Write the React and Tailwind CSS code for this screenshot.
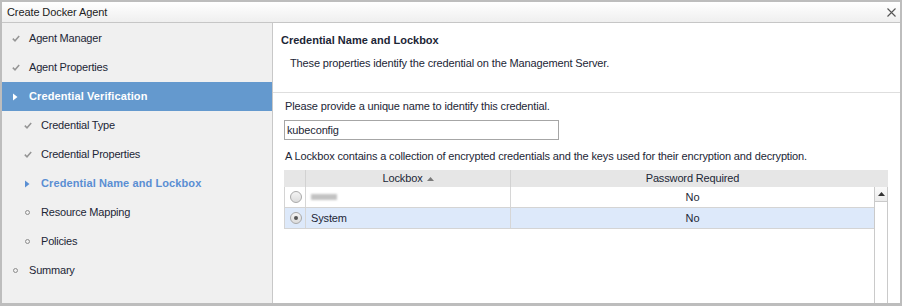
import React from "react";

const Check = () => (
  <svg width="8" height="7" viewBox="0 0 8 7" className="block">
    <path d="M0.8 3.6 L3 5.8 L7.2 1" fill="none" stroke="#959595" strokeWidth="1.5" />
  </svg>
);

const Tri = ({ color }) => (
  <svg width="5" height="8" viewBox="0 0 5 8" className="block">
    <polygon points="0,0.5 4.5,4 0,7.5" fill={color} />
  </svg>
);

const Circ = () => <div className="w-[5px] h-[5px] rounded-full border border-[#8c8c8c]" />;

function NavItem({ level, icon, label, selected, current }) {
  return (
    <div
      className={
        "h-[29px] flex items-center " +
        (level === 0 ? "pl-[10px] " : "pl-[22px] ") +
        (selected ? "bg-[#6499ce] " : "")
      }
    >
      <div className="w-[17px] flex items-center">
        {icon === "check" && <Check />}
        {icon === "circle" && <div className="pl-[1px]"><Circ /></div>}
        {icon === "tri" && <div className="pl-[1px]"><Tri color={selected ? "#ffffff" : "#5a8fd3"} /></div>}
      </div>
      <span
        className={
          selected
            ? "text-white font-bold tracking-[0.1px]"
            : current
            ? "text-[#5a8ed3] font-bold tracking-[0.1px]"
            : "text-[#1c2636] tracking-[-0.2px]"
        }
      >
        {label}
      </span>
    </div>
  );
}

function Radio({ checked }) {
  return (
    <div className="w-[12px] h-[12px] rounded-full border border-[#a9a9a9] bg-gradient-to-b from-[#f4f4f4] to-[#dcdcdc] flex items-center justify-center">
      {checked && <div className="w-[4px] h-[4px] rounded-full bg-[#555]" />}
    </div>
  );
}

export default function App() {
  return (
    <div className="w-[902px] h-[306px] border-2 border-b-[3px] border-[#bdbdbd] bg-white flex flex-col font-['Liberation_Sans',Arial,sans-serif] text-[11px] text-[#1c2636] overflow-hidden">
      <div className="h-[21px] shrink-0 border-b border-[#c6c6c6] bg-gradient-to-b from-white to-[#efefef] flex items-center justify-between pl-[5px] pr-[4px]">
        <span className="text-[11px] text-[#222] tracking-[-0.1px] pt-[1px]">Create Docker Agent</span>
        <svg width="9" height="9" viewBox="0 0 9 9">
          <path d="M0.5 0.5 L8.5 8.5 M8.5 0.5 L0.5 8.5" stroke="#555" strokeWidth="1.1" />
        </svg>
      </div>
      <div className="flex flex-1 min-h-0">
        <div className="w-[271px] shrink-0 bg-[#f0f0f0] border-r border-[#c8c8c8] flex flex-col pt-[1px]">
          <NavItem level={0} icon="check" label="Agent Manager" />
          <NavItem level={0} icon="check" label="Agent Properties" />
          <NavItem level={0} icon="tri" label="Credential Verification" selected />
          <NavItem level={1} icon="check" label="Credential Type" />
          <NavItem level={1} icon="check" label="Credential Properties" />
          <NavItem level={1} icon="tri" label="Credential Name and Lockbox" current />
          <NavItem level={1} icon="circle" label="Resource Mapping" />
          <NavItem level={1} icon="circle" label="Policies" />
          <NavItem level={0} icon="circle" label="Summary" />
        </div>
        <div className="flex-1 flex flex-col min-w-0 tracking-[-0.14px]">
          <div className="h-[70px] shrink-0 border-b border-[#dedede] pl-[8px] pt-[10px]">
            <div className="h-[14px] leading-[14px] font-bold text-[#1c2636] tracking-normal">Credential Name and Lockbox</div>
            <div className="h-[14px] leading-[14px] mt-[9px] pl-[9px]">These properties identify the credential on the Management Server.</div>
          </div>
          <div className="flex-1 flex flex-col pl-[11px] pt-[6px] min-h-0">
            <div className="h-[14px] leading-[14px] pl-[1px]">Please provide a unique name to identify this credential.</div>
            <div className="mt-[7px] w-[275px] h-[20px] border border-[#a6a6a6] flex items-center pl-[2px]">kubeconfig</div>
            <div className="h-[14px] leading-[14px] mt-[9px] pl-[1px]">A Lockbox contains a collection of encrypted credentials and the keys used for their encryption and decryption.</div>
            <div className="mt-[7px] w-[604px] flex-1 flex flex-col min-h-0">
              <div className="h-[17px] shrink-0 flex bg-[#e6e6e6]">
                <div className="w-[22px] border-r border-[#d2d2d2]" />
                <div className="w-[205px] border-r border-[#d2d2d2] flex items-center justify-center gap-[4px]">
                  <span>Lockbox</span>
                  <svg width="7" height="4" viewBox="0 0 7 4"><polygon points="0,4 3.5,0 7,4" fill="#7a7a7a" /></svg>
                </div>
                <div className="w-[363px] flex items-center justify-center">Password Required</div>
                <div className="w-[14px]" />
              </div>
              <div className="flex flex-1 min-h-0">
                <div className="w-[590px] flex flex-col">
                  <div className="h-[21px] flex border-b border-[#d4d4d4] border-l">
                    <div className="w-[21px] border-r border-[#d6d6d6] flex items-center justify-center pl-[1px]"><Radio /></div>
                    <div className="w-[205px] border-r border-[#d6d6d6] flex items-center pl-[5px]">
                      <div className="w-[26px] h-[6px] bg-[#c2c2c2] blur-[1.2px]" />
                    </div>
                    <div className="flex-1 flex items-center justify-center">No</div>
                  </div>
                  <div className="h-[21px] flex border-b border-[#d4d4d4] border-l bg-[#dde9fa]">
                    <div className="w-[21px] border-r border-[#d6d6d6] flex items-center justify-center pl-[1px]"><Radio checked /></div>
                    <div className="w-[205px] border-r border-[#d6d6d6] flex items-center pl-[5px]">System</div>
                    <div className="flex-1 flex items-center justify-center">No</div>
                  </div>
                </div>
                <div className="w-[14px] flex flex-col border-l border-r border-[#cacaca]">
                  <div className="h-[15px] shrink-0 border-b border-[#cacaca] bg-gradient-to-b from-[#fafafa] to-[#ececec] flex items-center justify-center">
                    <svg width="7" height="4" viewBox="0 0 7 4"><polygon points="0,4 3.5,0 7,4" fill="#333" /></svg>
                  </div>
                  <div className="flex-1 bg-white" />
                </div>
              </div>
            </div>
          </div>
        </div>
      </div>
    </div>
  );
}
